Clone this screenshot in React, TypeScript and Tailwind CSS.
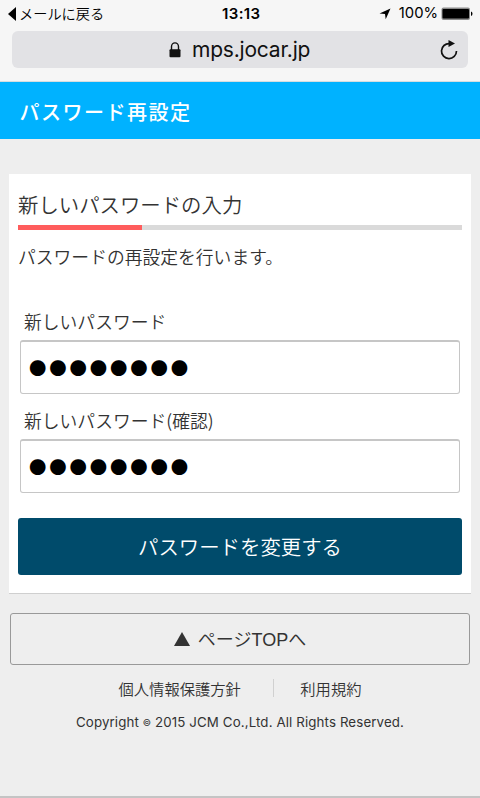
type PasswordFieldProps = {
  label: string
  value: string
}

function StatusBar() {
  return (
    <div className="relative flex h-[27px] items-center justify-between pl-2 pr-[7px] text-black">
      <div className="flex items-center">
        <svg width="8" height="14" viewBox="0 0 8 14">
          <path d="M8 0V14L0 7Z" fill="#000" />
        </svg>
        <span className="ml-[3px] whitespace-nowrap text-[14.2px] font-[350] leading-[24px] -translate-y-px">メールに戻る</span>
      </div>
      <span className="absolute left-[222px] top-0 font-['Inter',sans-serif] text-[15px] font-semibold leading-[27px] tracking-[0.4px]">13:13</span>
      <div className="flex items-center">
        <svg width="12" height="12" viewBox="0 0 12 12" className="mr-2">
          <path d="M11.5 0.5L6.7 11.2L6 6L0.5 5.4Z" fill="#000" />
        </svg>
        <span className="mr-[3px] font-['Inter',sans-serif] text-[14.8px] leading-[27px]">100%</span>
        <svg width="32" height="14" viewBox="0 0 32 14">
          <rect x="0.5" y="0.5" width="28.5" height="12.5" rx="2" fill="#8a8a8a" />
          <rect x="1.5" y="2" width="26.5" height="9.5" rx="1" fill="#000" />
          <path d="M30 4.5Q31.5 5 31.5 6.8T30 9Z" fill="#000" />
        </svg>
      </div>
    </div>
  )
}

function AddressBar() {
  return (
    <div className="mx-3 mt-1 flex h-[37px] items-center rounded-[6px] bg-[#e2e2e5] pl-[157px] pr-[10px]">
      <svg width="12" height="16" viewBox="0 0 12 16">
        <path d="M2.5 8V4.8a3.5 3.9 0 0 1 7 0V8" fill="none" stroke="#111" strokeWidth="1.4" />
        <rect x="0.5" y="7.2" width="11" height="8" rx="1" fill="#111" />
      </svg>
      <span className="ml-[11px] font-['Inter',sans-serif] text-[21px] leading-[36px] tracking-[-0.2px] text-[#111]">mps.jocar.jp</span>
      <svg width="18" height="20" viewBox="0 0 18 20" className="ml-auto">
        <path d="M9.5 3.6A7.5 7.5 0 1 0 16.5 11.1" fill="none" stroke="#111" strokeWidth="1.7" />
        <path d="M8.5 0L15 3.6L8.5 7Z" fill="#111" />
      </svg>
    </div>
  )
}

function PasswordField({ label, value }: PasswordFieldProps) {
  return (
    <div className="mx-[2px] h-[98.5px]">
      <div className="h-[34px] pl-1 text-[17.8px] leading-[31px]">{label}</div>
      <div className="flex h-[54px] items-center rounded-[3px] border border-t-2 border-[#c6c6c6] bg-white pl-[8px] pt-px text-[17.4px] leading-none tracking-[2.85px] text-black">
        {value.replace(/./g, '●')}
      </div>
    </div>
  )
}

export default function App() {
  return (
    <div className="flex h-[798px] w-[480px] flex-col overflow-hidden bg-[#eeeeee] font-['Noto_Sans_CJK_JP',sans-serif] text-[#333]">
      <header className="h-[82px] shrink-0 border-b border-[#d5dde0] bg-[#f6f6f6]">
        <StatusBar />
        <AddressBar />
      </header>

      <div className="h-[57px] shrink-0 bg-[#00b2ff] pl-[19.5px] text-[20px] font-medium leading-[60px] tracking-[1.5px] text-white">
        パスワード再設定
      </div>

      <main className="ml-[9px] mr-[9px] mt-[35px] h-[420px] shrink-0 border-b border-[#cfcfcf] bg-white px-[9px]">
        <h2 className="h-[51px] text-[20.4px] font-[350] leading-[61px]">新しいパスワードの入力</h2>
        <div className="h-[5px] bg-[#dadada]">
          <div className="h-full w-[124px] bg-[#ff5c5c]" />
        </div>
        <p className="mb-[30px] mt-[11px] text-[17.8px] font-[350] leading-[31px]">パスワードの再設定を行います。</p>
        <div className="pt-[4px] font-[350]">
          <PasswordField label="新しいパスワード" value="password" />
          <PasswordField label="新しいパスワード(確認)" value="password" />
        </div>
        <button className="mt-[15px] block h-[57px] w-full rounded-[3px] bg-[#004b6b] text-[20.4px] font-[350] leading-[55px] text-white">
          パスワードを変更する
        </button>
      </main>

      <footer className="flex flex-col items-center">
        <div className="mt-[19px] flex h-[52px] w-[460px] items-center justify-center rounded-[3px] border border-[#999] font-['Liberation_Sans','Noto_Sans_CJK_JP',sans-serif] text-[18px] font-[350]">
          <svg width="16" height="14" viewBox="0 0 16 14" className="mr-2">
            <path d="M8 0L16 14H0Z" fill="#333" />
          </svg>
          <span className="pt-[2px]">ページTOPへ</span>
        </div>
        <div className="mt-[11px] flex h-6 w-[243px] items-center text-[15.3px] font-[350] leading-6">
          <span>個人情報保護方針</span>
          <span className="ml-[32px] mr-auto h-[18px] w-px bg-[#d0d0d0]" />
          <span>利用規約</span>
        </div>
        <div className="mt-[12px] whitespace-nowrap font-['Inter',sans-serif] text-[13.3px] leading-5 tracking-[0.12px]">
          Copyright <span className="text-[9px] align-[1px]">©</span> 2015 JCM Co.,Ltd. All Rights Reserved.
        </div>
      </footer>
      <div className="mt-auto h-[2px] shrink-0 bg-[#c4c4c4]" />
    </div>
  )
}
